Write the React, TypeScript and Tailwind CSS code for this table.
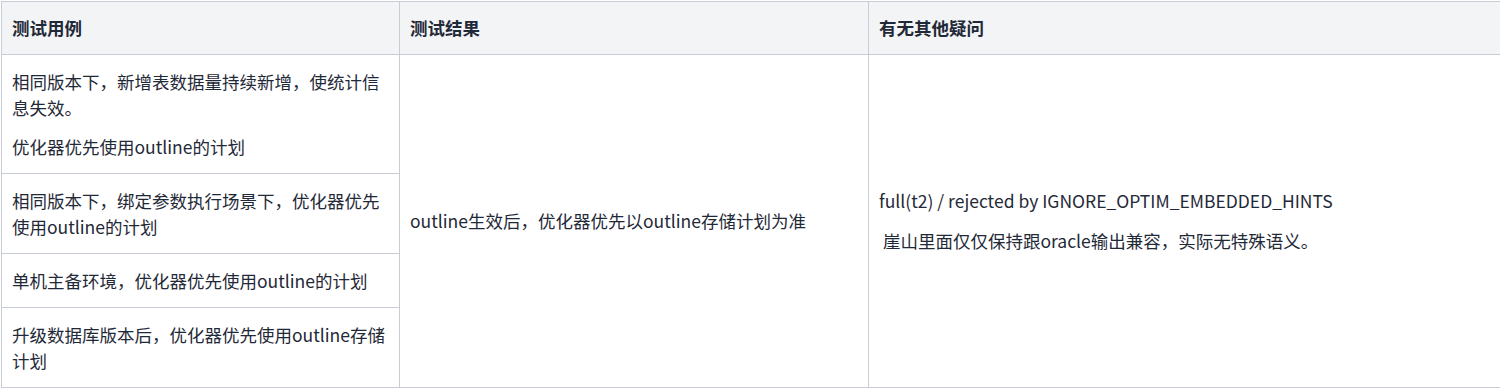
import React from "react";

const font = { fontFamily: '"Noto Sans CJK SC", "Noto Sans", sans-serif' };

export default function App() {
  const td = "border border-[#c8ccd6] px-[10px] py-[13.5px] align-middle text-left";
  return (
    <div className="w-[1500px] h-[392px] overflow-hidden bg-white pt-px pl-px" style={font}>
      <table className="border-collapse w-[1540px] table-fixed text-[17.5px] leading-[26px] text-[#1f2937]">
        <colgroup>
          <col className="w-[398px]" />
          <col className="w-[469px]" />
          <col />
        </colgroup>
        <thead>
          <tr className="bg-[#f3f4f6]">
            <th className={`${td} font-bold py-[13px]`}>测试用例</th>
            <th className={`${td} font-bold py-[13px]`}>测试结果</th>
            <th className={`${td} font-bold py-[13px]`}>有无其他疑问</th>
          </tr>
        </thead>
        <tbody>
          <tr>
            <td className={td}>
              <p>相同版本下，新增表数据量持续新增，使统计信息失效。</p>
              <p className="mt-[13px]">优化器优先使用outline的计划</p>
            </td>
            <td className={td} rowSpan={4}>
              outline生效后，优化器优先以outline存储计划为准
            </td>
            <td className={td} rowSpan={4}>
              <p>full(t2) / rejected by IGNORE_OPTIM_EMBEDDED_HINTS</p>
              <p className="mt-[14px]">&nbsp;崖山里面仅仅保持跟oracle输出兼容，实际无特殊语义。</p>
            </td>
          </tr>
          <tr>
            <td className={td}>相同版本下，绑定参数执行场景下，优化器优先使用outline的计划</td>
          </tr>
          <tr>
            <td className={td}>单机主备环境，优化器优先使用outline的计划</td>
          </tr>
          <tr>
            <td className={td}>升级数据库版本后，优化器优先使用outline存储计划</td>
          </tr>
        </tbody>
      </table>
    </div>
  );
}
